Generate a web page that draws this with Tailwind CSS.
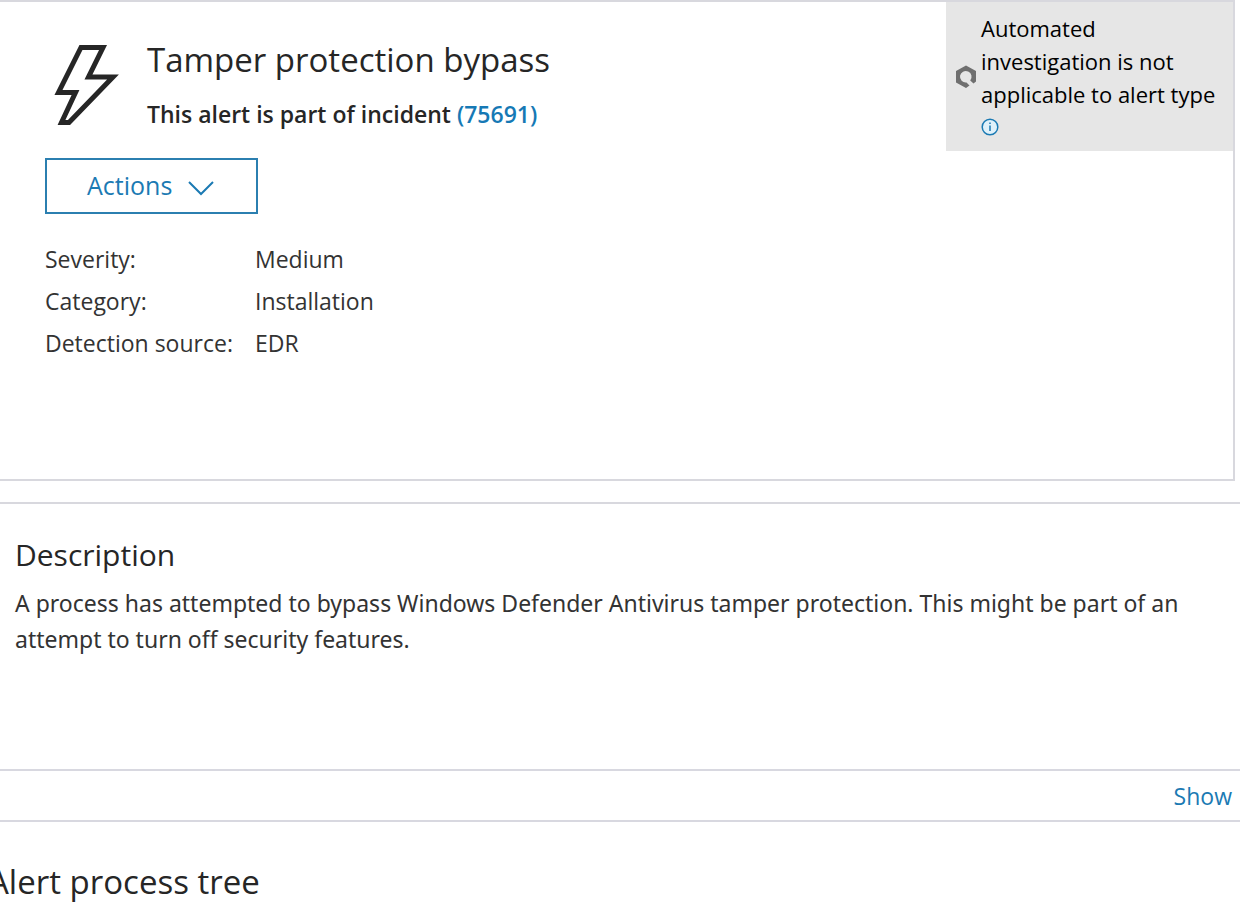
<!DOCTYPE html>
<html lang="en">
<head>
<meta charset="utf-8">
<meta name="viewport" content="width=device-width, initial-scale=1">
<title>Tamper protection bypass</title>
<script src="https://cdn.jsdelivr.net/npm/@tailwindcss/browser@4"></script>
</head>
<body class="bg-white font-['Open_Sans','Noto_Sans',sans-serif] text-[23px] text-[#333333] overflow-x-hidden">
<main>
  <section class="mr-[5px] flex min-h-[481px] items-start justify-between border-t-2 border-r-2 border-b-2 border-[#d8d8de]">
    <div class="pl-[45px] pt-[34px]">
      <header class="flex items-start">
        <svg class="ml-2 mt-1 h-[88px] w-[70px]" viewBox="0 0 70 88" fill="none" stroke="#262626" stroke-width="5" aria-hidden="true"><path d="M28 7.500H50L35.500 37H60L16 82.500H8.500L22.500 52.500H5.500Z"/></svg>
        <div class="ml-6 pt-0.5">
          <h1 class="text-[33px] leading-[44px] text-[#262626]">Tamper protection bypass</h1>
          <p class="mt-4 leading-8 font-semibold text-[#262626]">This alert is part of incident <a href="#" class="text-[#1679b5]">(75691)</a></p>
        </div>
      </header>
      <button type="button" class="mt-7 flex h-14 w-[213px] items-center gap-4 border-2 border-[#2b7fb0] pl-10 text-[25px] text-[#1b7ab3]">
        Actions
        <svg class="mt-1 h-4 w-[26px]" viewBox="0 0 26 16" fill="none" stroke="#1b7ab3" stroke-width="2" aria-hidden="true"><path d="M1 2L13 14L25 2"/></svg>
      </button>
      <dl class="mt-6 grid grid-cols-[210px_auto] leading-[42px]">
        <dt>Severity:</dt><dd>Medium</dd>
        <dt>Category:</dt><dd>Installation</dd>
        <dt>Detection source:</dt><dd>EDR</dd>
      </dl>
    </div>
    <aside class="flex h-[149px] w-[287px] items-center bg-[#e6e6e6] pl-[9px] text-[22px] text-black">
      <svg class="h-6 w-[22px] shrink-0" viewBox="0 0 22 24" fill="none" aria-hidden="true"><path fill="#6f6f6f" d="M11 0.500L21 6V16.500L18.500 18.500L15.200 15.500A5.800 5.800 0 1 0 11.500 17.500L14.500 20.500L11 23L1 17.500V6Z"/></svg>
      <div class="ml-1 pt-0.5 leading-[33px]">
        <p>Automated<br>investigation is not<br>applicable to alert type</p>
        <button type="button" aria-label="More information" class="flex h-[33px] items-center"><svg class="h-[18px] w-[18px]" viewBox="0 0 18 18" fill="none" stroke="#1b7ab3" aria-hidden="true"><circle cx="9" cy="9" r="7.800" fill="#e0f1fa" stroke-width="1.500"/><path stroke-width="1.500" d="M9 7.500V13M9 4.500V6"/></svg></button>
      </div>
    </aside>
  </section>
  <section class="mt-[21px] min-h-[267px] border-t-2 border-[#d8d8de] px-[15px] pt-[29px]">
    <h2 class="text-[30px] leading-[44px] text-[#262626]">Description</h2>
    <p class="mt-2 max-w-[1200px] font-['Noto_Sans','Open_Sans',sans-serif] leading-9">A process has attempted to bypass Windows Defender Antivirus tamper protection. This might be part of an attempt to turn off security features.</p>
  </section>
  <div class="flex h-[53px] items-center justify-end border-y-2 border-[#d8d8e0] pt-0.5 pr-2">
    <a href="#" class="text-[#1b7ab3]">Show</a>
  </div>
  <h2 class="-ml-3 pt-[38px] text-[33px] leading-[44px] text-[#262626]">Alert process tree</h2>
</main>
</body>
</html>
